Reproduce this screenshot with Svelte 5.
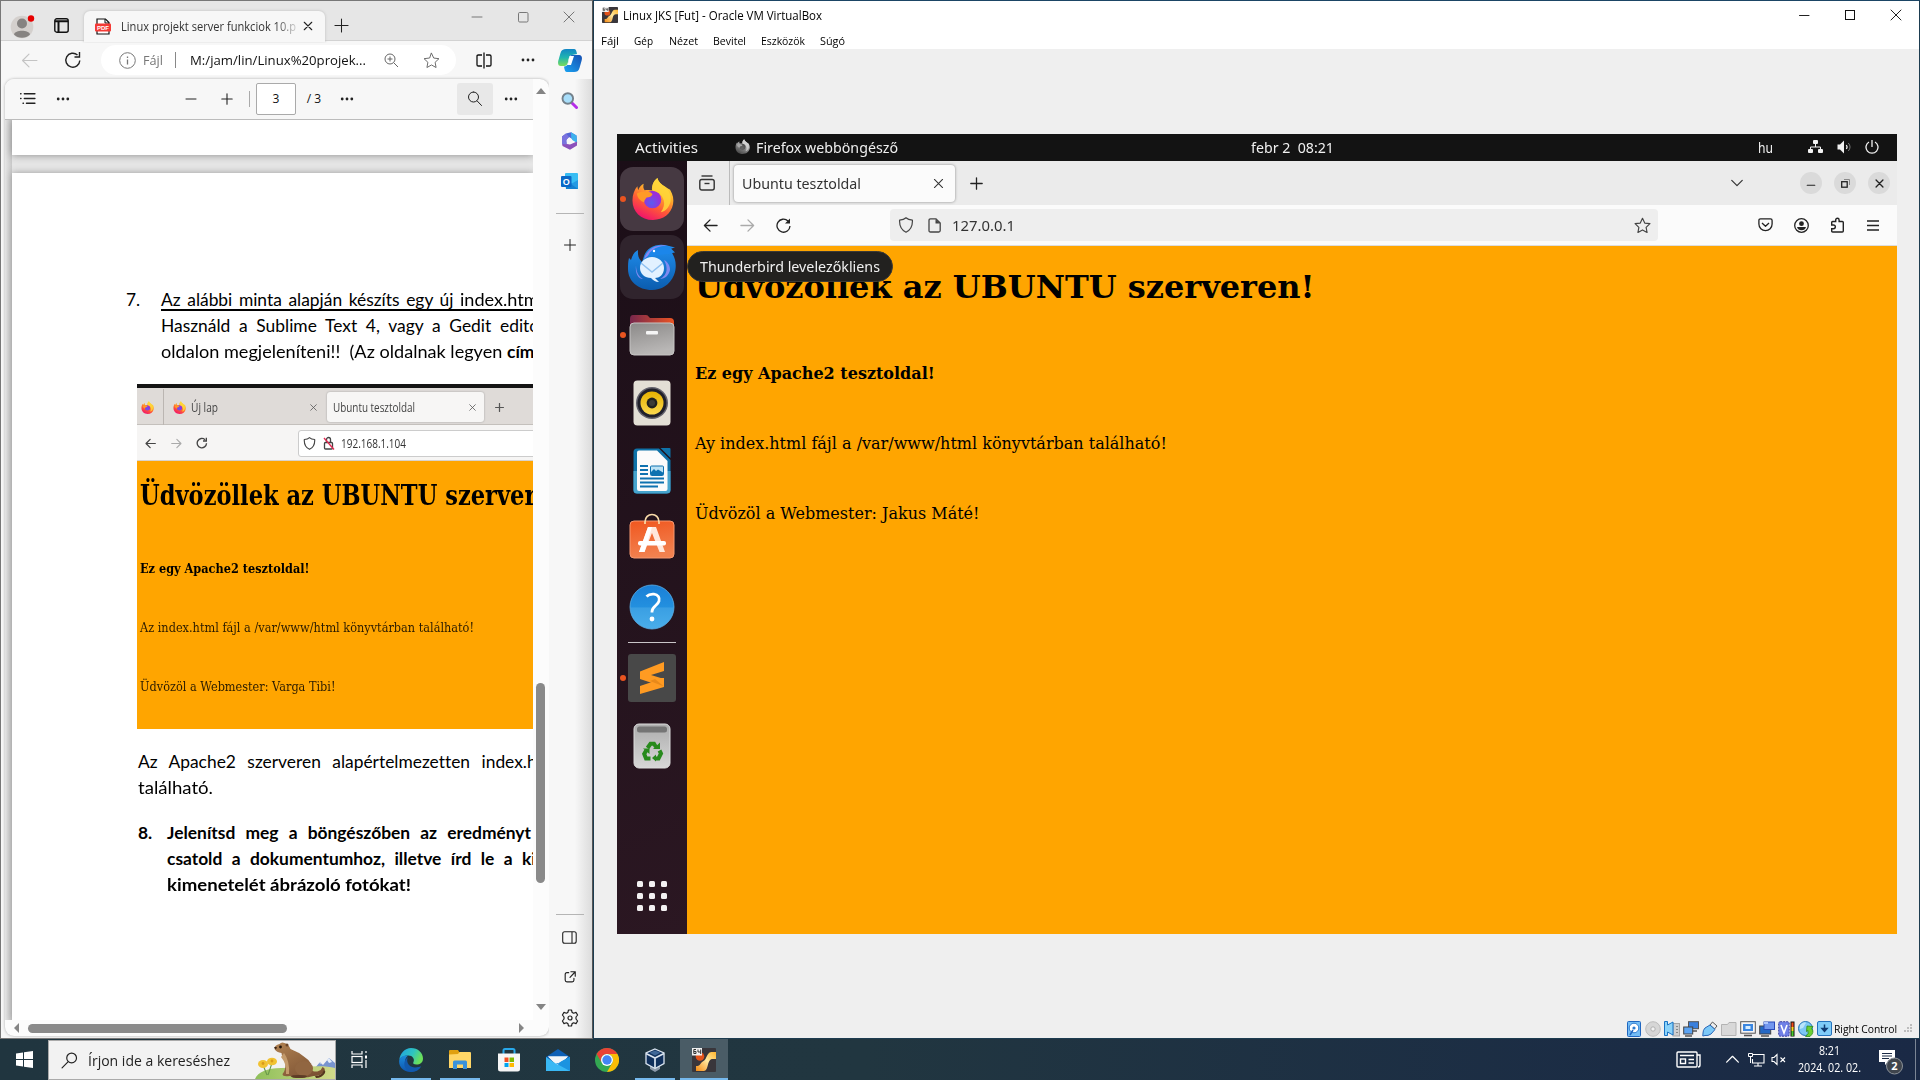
<script>
  // Stretches or narrows a line of text so that it takes up the given width.
  function fit(node, width) {
    const natural = node.getBoundingClientRect().width;
    if (!natural) return;
    node.style.transform = `scaleX(${width / natural})`;
    node.style.marginRight = `${width - natural}px`;
  }

  // Widens the spaces of a justified line until it reaches the given width.
  function justify(node, width) {
    const gaps = (node.textContent.match(/ /g) || []).length;
    const natural = node.getBoundingClientRect().width;
    node.style.wordSpacing = `${(width - natural) / gaps}px`;
  }

  const menus = [
    { label: 'Fájl', w: 18, col: 33 },
    { label: 'Gép', w: 19, col: 35 },
    { label: 'Nézet', w: 29, col: 44 },
    { label: 'Bevitel', w: 33, col: 48 },
    { label: 'Eszközök', w: 44, col: 59 },
    { label: 'Súgó', w: 25, col: 40 }
  ];

  const X = 'M3 3l10 10M13 3L3 13';
  const PLUS = 'M8 1v14M1 8h14';
  const BACK = 'M15 8H1.5M7.5 2l-6 6 6 6';
  const FORWARD = 'M1 8h13.500M8.500 2l6 6-6 6';
  const STAR = 'M8 1.200l2.100 4.500 4.900.6-3.600 3.400.9 4.900L8 12.200l-4.300 2.400.9-4.900L1 6.300l4.900-.6z';
  const SHIELD = 'M8 .8C6.500 2.200 4.400 2.900 1.600 3.100 1.300 8.500 3.500 13 8 15.200c4.500-2.200 6.700-6.700 6.400-12.100C11.600 2.900 9.500 2.200 8 .8z';
</script>

{#snippet line(d, size = 16, sw = 1, color = '#222')}
  <svg width={size} height={size} viewBox="0 0 16 16" fill="none" stroke={color} stroke-width={sw} stroke-linejoin="round" stroke-linecap="round"><path {d} /></svg>
{/snippet}

{#snippet dots(gap = 5, color = '#222')}
  <svg width="16" height="4" viewBox="-8 -2 16 4" fill={color}><circle cx={-gap} r="1.400" /><circle r="1.400" /><circle cx={gap} r="1.400" /></svg>
{/snippet}

{#snippet reload(size = 18, sw = 1.3, color = '#222')}
  <svg width={size} height={size} viewBox="0 0 18 18" fill="none" stroke={color} stroke-width={sw}><path d="M15.800 9.500A7 7 0 1 1 13.500 4M15.500 1v5h-5" /></svg>
{/snippet}

{#snippet firefox(size, gray = false)}
  <svg width={size} height={size} viewBox="0 0 42 44" class:gray>
    <defs>
      <linearGradient id="ffBody" x1=".8" y1="0" x2=".3" y2="1"><stop offset="0" stop-color="#fff04a" /><stop offset=".35" stop-color="#ffb02a" /><stop offset=".65" stop-color="#ff5a36" /><stop offset="1" stop-color="#f0106e" /></linearGradient>
      <radialGradient id="ffGlobe" cx=".45" cy=".7"><stop offset="0" stop-color="#5a5cf0" /><stop offset="1" stop-color="#9a30d8" /></radialGradient>
    </defs>
    <path fill="url(#ffBody)" d="M26 1c1 4 4 6.500 8 9 3 2 5 3 5 3 3 5 4 10 3 15-2 10-10 16-20.500 16C9 44 .5 35.500.5 24c0-6 2-11 5-14.500l.8 4c1.200-3 3.200-5.500 5.700-6.500-.8 3-.3 5 1 6.500 3-.6 6 0 8 .3C20 9 22 4 26 1z" />
    <circle cx="21" cy="23" r="9" fill="url(#ffGlobe)" />
    <path fill="#ff9a26" d="M5 17c3-2 6-2.500 9-1.500 3-.8 6 0 7 2.500-1 2-3 3-6 3-1.500 2-2.500 3-2.500 5C9 25 5.500 22 5 17z" />
    <path fill="#ffd63a" d="M26 1c1 4 4 6.500 8 9 4 4 6.500 9 5.500 15-1.500 6-5 10-10 11 3-4 4-8 3-12-1.200-5-5-9-12-10.500C20 9 22 4 26 1z" opacity=".85" />
  </svg>
{/snippet}

{#snippet vmIcon(size)}
  <svg width={size} height={size} viewBox="0 0 24 24">
    <defs><linearGradient id="vmPipe" x1="1" y1="0" x2="0" y2="1"><stop offset="0" stop-color="#ffb52e" /><stop offset=".45" stop-color="#ffe9a0" /><stop offset="1" stop-color="#f58a14" /></linearGradient></defs>
    <rect width="24" height="24" rx="1" fill="#39363b" />
    <circle cx="8" cy="8.500" r="4.300" fill="#e2521a" />
    <path fill="url(#vmPipe)" d="M24 4v7h-3c-3 0-4 2-5 5.500-1 4.500-2 6-4 6.500H4v-5c2 0 3 0 4-1.500 1.500-3 4-3 5.500-5.500 2-4 3-7 6-7z" />
    <rect width="10" height="7.500" fill="#f0f0f0" />
    <path d="M4 1.500H1.800v4H4V3.500H1.800M6 1.500V4h2.700M8.700 1.500v4.500" stroke="#333" fill="none" />
  </svg>
{/snippet}

<div class="desktop">
  <section class="edge">
    <header class="titlebar">
      <svg width="26" height="26" viewBox="0 0 26 26"><circle cx="12" cy="14" r="11.300" fill="#d4d0cd" /><circle cx="12" cy="10.500" r="5" fill="#868381" /><path d="M4 21.500c1-5 15-5 16 0a11.300 11.300 0 0 1-16 0z" fill="#868381" /><circle cx="21" cy="5.500" r="3.200" fill="#e60000" /></svg>
      <svg width="15" height="15" viewBox="0 0 15 15" fill="none" stroke="#111" stroke-width="1.400"><rect x=".8" y=".8" width="13.400" height="13.400" rx="2" /><path d="M1 3.200h13M4.500 4v10" stroke-width="2" /></svg>
      <div class="etab">
        <svg width="16" height="17" viewBox="0 0 16 17"><path d="M2 1h8.500L14 4.500V16H2z" fill="#fff" stroke="#111" stroke-width="1.200" /><path d="M10 1v4h4" fill="none" stroke="#111" /><rect y="5.500" width="16" height="8" rx="1" fill="#f43a35" /><text x="8" y="11.800" text-anchor="middle" class="pdf">PDF</text></svg>
        <div class="tabtitle"><span class="t" use:fit={175}>Linux projekt server funkciok 10.p</span></div>
        {@render line(X, 12, 1.5)}
      </div>
      {@render line(PLUS, 15, 1.1)}
      <i></i>
      {@render line('M3 8h10', 16, 1, '#777')}
      <svg width="11" height="11" viewBox="0 0 11 11"><rect x=".5" y=".5" width="9.500" height="9.500" rx="1.200" fill="none" stroke="#777" /></svg>
      {@render line(X, 16, 1, '#777')}
    </header>

    <div class="address">
      {@render line(BACK, 17, 1.1, '#c4c4c4')}
      {@render reload(18, 1.4)}
      <i></i>
      <div class="pill">
        <svg width="17" height="17" viewBox="0 0 17 17" fill="none" stroke="#777"><circle cx="8.500" cy="8.500" r="7.800" /><path d="M8.500 7.500v5M8.500 4.500v1.500" stroke-width="1.300" /></svg>
        <i></i><span class="t grey" use:fit={20}>Fájl</span>
        <b></b><i></i>
        <span class="t" use:fit={176}>M:/jam/lin/Linux%20projek...</span>
        <svg width="15" height="15" viewBox="0 0 15 15" fill="none" stroke="#666"><circle cx="6" cy="6" r="5" /><path d="M9.800 9.800L14 14M6 3.500v5M3.500 6h5" /></svg>
        {@render line(STAR, 17, 0.9, '#666')}
      </div>
      <svg width="16" height="17" viewBox="0 0 16 17" fill="none" stroke="#111" stroke-width="1.300"><path d="M6 3H2.300Q1 3 1 4.300v8.400Q1 14 2.300 14H6M10 3h3.700Q15 3 15 4.300v8.400Q15 14 13.700 14H10M8 .5v16" /></svg>
      {@render dots(5)}
      <i></i>
      <svg width="24" height="23" viewBox="0 0 24 23">
        <defs><linearGradient id="cp1" x1="0" y1="0" x2="0" y2="1"><stop offset="0" stop-color="#1386c5" /><stop offset=".5" stop-color="#20b5b0" /><stop offset="1" stop-color="#7bdc5a" /></linearGradient><linearGradient id="cp2" x1="1" y1="0" x2="0" y2="1"><stop offset="0" stop-color="#164fb2" /><stop offset="1" stop-color="#1aa4f2" /></linearGradient></defs>
        <path d="M8 0h8c2 0 2.500 2 3 5l-5 1c-3 0-3 3-4 7-.8 3-2 4-4 4H3c-3 0-3.500-3-2.500-6l2-7C3.500 1 5 0 8 0z" fill="url(#cp1)" />
        <path d="M14 6h7c3 0 3.500 3 2.500 6l-2 7c-1 3-2.500 4-5.500 4H9c-2 0-2.500-2-3-5.500 3 0 4-2 5-6.500.5-3 1-5 3-5z" fill="url(#cp2)" />
        <path d="M12 7h4l-3 9H9c2-2 1.500-8 3-9z" fill="#fff" />
      </svg>
    </div>

    <div class="below">
      <div class="viewer">
        <div class="docside">
          <div class="pdfbar">
            {@render line('M5 3.500h10M5 8h10M7 12.500h8M1.500 3.500h.4M1.500 8h.4M3.800 12.500h.4', 17, 1.3)}
            {@render dots(4.8)}
            <i></i>
            {@render line('M3 8h10', 16, 1)}
            {@render line('M8 2.800v10.400M2.800 8h10.400', 16, 1.1)}
            <b></b>
            <div class="pageno">3</div>
            <span class="t count">/ 3</span>
            {@render dots(4.8)}
            <i></i>
            <div class="find">{@render line('M6.500 1a5 5 0 1 0 0 10 5 5 0 0 0 0-10M10.200 10l4.300 4.500', 16, 1)}</div>
            {@render dots(4.8)}
          </div>
          <div class="paper">
            <div class="prev"></div>
            <div class="page">
              <div class="task seven">
                <span>7.</span>
                <div>
                  <p><span class="t u" use:justify={299}>Az alábbi minta alapján készíts egy új{' '}</span><span class="t u" use:fit={83}>index.html</span></p>
                  <p><span class="t" use:justify={339}>Használd a Sublime Text 4, vagy a Gedit{' '}</span>editort</p>
                  <p><span class="t" use:fit={346}>oldalon megjeleníteni!! &nbsp;(Az oldalnak legyen{' '}</span><strong>címe</strong></p>
                </div>
              </div>
              <div class="shot">
                <div class="black"></div>
                <div class="stabs">
                  {@render firefox(13)}
                  <b></b>
                  {@render firefox(13)}
                  <span class="t" use:fit={27}>Új lap</span>
                  {@render line(X, 9, 1.4, '#555')}
                  <div class="stab"><span class="t" use:fit={82}>Ubuntu tesztoldal</span>{@render line(X, 9, 1.4, '#555')}</div>
                  {@render line(PLUS, 9, 2.2, '#555')}
                </div>
                <div class="sbar">
                  {@render line(BACK, 11, 1.8, '#444')}
                  {@render line(FORWARD, 11, 1.6, '#aaa')}
                  {@render reload(12, 2, '#444')}
                  <div class="surl">
                    {@render line(SHIELD, 13, 1.4, '#444')}
                    <svg width="12" height="15" viewBox="0 0 12 15" fill="none" stroke="#444" stroke-width="1.300"><rect x="1.500" y="6.500" width="8" height="6.500" rx="1" /><path d="M3.500 6V3.500a2 2 0 0 1 4 0V6" /><path d="M1 2l10 11.500" stroke="#e22850" /></svg>
                    <span class="t" use:fit={65}>192.168.1.104</span>
                  </div>
                </div>
                <div class="sorange">
                  <h2><span class="t" use:fit={437}>Üdvözöllek az UBUNTU szerveren!</span></h2>
                  <h3><span class="t" use:fit={169.5}>Ez egy Apache2 tesztoldal!</span></h3>
                  <p><span class="t" use:fit={334}>Az index.html fájl a /var/www/html könyvtárban található!</span></p>
                  <p><span class="t" use:fit={195.5}>Üdvözöl a Webmester: Varga Tibi!</span></p>
                </div>
              </div>
              <div class="para">
                <p><span class="t" use:justify={343.5}>Az Apache2 szerveren alapértelmezetten{' '}</span>index.html</p>
                <p><span class="t" use:fit={75}>található.</span></p>
              </div>
              <div class="task eight">
                <span>8.</span>
                <div>
                  <p><span class="t" use:justify={364}>Jelenítsd meg a böngészőben az eredményt</span></p>
                  <p><span class="t" use:justify={355}>csatold a dokumentumhoz, illetve írd le a{' '}</span>kiszolgáló</p>
                  <p><span class="t" use:fit={244}>kimenetelét ábrázoló fotókat!</span></p>
                </div>
              </div>
            </div>
          </div>
        </div>
        <div class="vscroll"><svg width="10" height="6"><path d="M5 0l5 6H0z" fill="#858585" /></svg><div></div><svg width="10" height="6"><path d="M5 6l5-6H0z" fill="#858585" /></svg></div>
        <div class="hscroll"><svg width="6" height="10"><path d="M0 5l5-5v10z" fill="#858585" /></svg><div></div><svg width="6" height="10"><path d="M6 5L1 0v10z" fill="#858585" /></svg></div>
      </div>

      <aside>
        <svg width="17" height="17" viewBox="0 0 17 17"><path d="M10 10l5.500 5.500" stroke="#b52ee8" stroke-width="3" stroke-linecap="round" /><circle cx="6.800" cy="6.500" r="5.300" fill="#a8defa" stroke="#74818b" stroke-width="1.900" /></svg>
        <svg width="17" height="18" viewBox="0 0 17 18"><path d="M5 1.500L10 .3l5.500 3.200.5 7-4-3L8 5 5.500 8v6L1 12V4.500z" fill="#5465d6" /><path d="M10 .3l5.500 3.200.7 7.500-5-3-1-2.500z" fill="#3eb1ed" /><path d="M1 11l5 1 3 .5 7-3v4L9 17.700 1.500 14z" fill="#8b50bb" /><path d="M1 4.500L5 1.500 8 5 5.500 8v4.500L1 12z" fill="#7a72de" /><circle cx="8.500" cy="9" r="2.800" fill="#f5f5f8" /></svg>
        <svg width="18" height="17" viewBox="0 0 18 17"><rect x="4" width="13" height="14" rx="1" fill="#38bdf3" /><path d="M4 8l13 5v3H5z" fill="#1480d0" /><path d="M17 7v9l-7-5z" fill="#2499e3" /><rect x="0" y="3" width="10.500" height="11" rx="1" fill="#0b69c7" /><text x="5.200" y="11.800" text-anchor="middle" class="olk">O</text></svg>
        <hr />
        {@render line('M8 2.500v11M2.500 8h11', 16, 1)}
        <i></i>
        <hr class="end" />
        <i></i>
        <svg width="15" height="13" viewBox="0 0 15 13" fill="none" stroke="#222" stroke-width="1.100"><rect x=".7" y=".7" width="13.500" height="11.500" rx="2" /><path d="M10 1v11" /></svg>
        {@render line('M6.500 3H4.500Q2.500 3 2.500 5v6.500q0 2 2 2h6q2 0 2-2V9.500M9 2h5v5M14 2L8 8.500', 14, 1.3)}
        <svg width="18" height="18" viewBox="0 0 18 18" fill="none" stroke="#222" stroke-width="1.200"><path d="M7.500 1h3l.6 2.400 1.500.8 2.400-.8L16.600 6 15 8v2l1.600 2-1.600 2.600-2.400-.8-1.500.8-.6 2.400h-3l-.6-2.400-1.500-.8-2.400.8L1.400 12 3 10V8L1.400 6 3 3.400l2.400.8 1.500-.8z" stroke-linejoin="round" /><circle cx="9" cy="9" r="2" /></svg>
      </aside>
    </div>
  </section>

  <section class="vbox">
    <header class="vtitle">
      {@render vmIcon(16)}
      <span class="t" use:fit={199}>Linux JKS [Fut] - Oracle VM VirtualBox</span>
      <i></i>
      {@render line('M3.500 8.500h9.500', 16, 1)}
      <svg width="11" height="11"><rect x=".5" y=".5" width="9" height="9" fill="none" stroke="#111" /></svg>
      {@render line('M3 3l10 10M13 3L3 13', 16, 1)}
    </header>
    <nav>{#each menus as m}<div style:width="{m.col}px"><span class="t" use:fit={m.w}>{m.label}</span></div>{/each}</nav>

    <div class="guest">
      <div class="topbar">
        <span class="t" use:fit={63}>Activities</span>
        {@render firefox(15, true)}
        <span class="t" use:fit={142}>Firefox webböngésző</span>
        <span class="t clock" use:fit={83}>febr 2 &nbsp;08:21</span>
        <span class="t hu" use:fit={15}>hu</span>
        <svg width="15" height="14" viewBox="0 0 15 14" fill="#f2f2f2"><rect x="5" width="5" height="4" rx="1" /><rect y="9" width="5" height="4" rx="1" /><rect x="10" y="9" width="5" height="4" rx="1" /><path d="M2.500 9V7h10v2M7.500 4v3" fill="none" stroke="#f2f2f2" /></svg>
        <svg width="15" height="14" viewBox="0 0 15 14"><path d="M.5 4.500H3L7 .5v13l-4-4H.5z" fill="#f2f2f2" /><path d="M9.300 5q1.600 2 0 4" stroke="#f2f2f2" fill="none" stroke-width="1.200" /><path d="M11.300 3q3.500 4 0 8" stroke="#777" fill="none" /></svg>
        <svg width="14" height="14" viewBox="0 0 14 14" fill="none" stroke="#f2f2f2" stroke-width="1.300"><path d="M4 2a6 6 0 1 0 6 0M7 0v7" /></svg>
      </div>

      <div class="dock">
        <div class="tile lit run">{@render firefox(43)}</div>
        <div class="tile soft">
          <svg width="50" height="50" viewBox="0 0 50 50">
            <defs><linearGradient id="tb" x1="0" y1="0" x2="0" y2="1"><stop offset="0" stop-color="#2190f0" /><stop offset="1" stop-color="#0b5cae" /></linearGradient></defs>
            <path d="M17 13C20 4 30 0 40 2.500l8 2-4 1 4 4-3 .5c4 6 5 14 2 22-4 10-13 15-22 15C11 47 1 38 1 26c0-4 0-7 1-11l2 2c1-4 3-8 7-10-.5 6 1 9 4 12z" fill="url(#tb)" />
            <path d="M17 16C20 6 29 1 40 2.500c-8 1-15 4-18 9.500z" fill="#8a86f0" />
            <path d="M21 13C24 6 31 3 40 2.800l6 2.200-4 1 4 4-4 1c-6 0-12 1-16 2z" fill="#1b86ea" />
            <path d="M37 17c4 7 4 15-4 19 5 0 9-4 10-9 0-4-2-8-6-10zM9 22c0 7 3 12 7 14-5 0-8-6-7-14z" fill="#7f8af0" />
            <path d="M25 14c7 0 12 5 12 11 0 7-5 10-9 10l4 4c-4 0-6-2-8-4-6 0-11-4-11-10s5-11 12-11z" fill="#e2f1ff" />
            <path d="M14 20l11 9 11-9" stroke="#8fc0f0" stroke-width="1.500" fill="none" /><circle cx="27" cy="8" r="1.200" fill="#fff" />
          </svg>
        </div>
        <div class="tile run">
          <svg width="46" height="42" viewBox="0 0 46 42">
            <defs><linearGradient id="fol" x2="1"><stop offset="0" stop-color="#77274c" /><stop offset="1" stop-color="#eb5424" /></linearGradient><linearGradient id="folg" x2=".3" y2="1"><stop offset="0" stop-color="#8b8988" /><stop offset="1" stop-color="#b9b7b6" /></linearGradient></defs>
            <path d="M4 1h13q2 0 3 2l1 1h20q4 0 4 4v15H1V5q0-4 3-4z" fill="url(#fol)" /><rect x="1" y="9" width="44" height="32" rx="4" fill="url(#folg)" stroke="#c6c4c3" /><rect x="17" y="17" width="12" height="3.500" rx="1" fill="#f5f5f5" />
          </svg>
        </div>
        <div class="tile">
          <svg width="38" height="46" viewBox="0 0 38 46"><defs><linearGradient id="spk" x2="0" y2="1"><stop offset="0" stop-color="#e5b100" /><stop offset="1" stop-color="#fbd94e" /></linearGradient></defs><rect x=".5" y=".5" width="37" height="45" rx="4" fill="#e3dfd5" /><circle cx="19" cy="23" r="16" fill="#62616b" /><circle cx="19" cy="23" r="14.500" fill="#20202a" /><circle cx="19" cy="23" r="11.500" fill="url(#spk)" /><circle cx="19" cy="23" r="5.400" fill="#20221f" /><circle cx="19" cy="23" r="3" fill="#3b3c38" /></svg>
        </div>
        <div class="tile">
          <svg width="38" height="46" viewBox="0 0 38 46"><path d="M4 .5h22L37.500 12v30q0 3.500-4 3.500H4Q.5 45.500.5 42V4Q.5.5 4 .5z" fill="#0f72a8" /><path d="M.5 23h37v19q0 3.500-4 3.500H4Q.5 45.500.5 42z" fill="#46a4cd" /><path d="M6 2.500h18L34.500 13v28q0 2-2 2H6q-2 0-2-2V4.500q0-2 2-2z" fill="#fbfbfb" /><path d="M27.500 0h9q1 0 1 1v9z" fill="#0f72a8" /><path d="M7 18h8M7 22h8M7 26h8M7 30.500h24M7 34.500h24M7 38.500h18" stroke="#0f72b0" stroke-width="1.900" /><rect x="17.500" y="18" width="13" height="9.500" rx="1" fill="#bde3f5" stroke="#0f72b0" /><path d="M18 27v-3l3-3 2 2 2-1.500 5 3V27z" fill="#0f72b0" /></svg>
        </div>
        <div class="tile store">
          <svg width="46" height="46" viewBox="0 0 46 46"><defs><linearGradient id="sw" x2=".2" y2="1"><stop offset="0" stop-color="#f0571f" /><stop offset="1" stop-color="#f2814f" /></linearGradient></defs><rect x="1" y="8" width="44" height="37" rx="4" fill="url(#sw)" stroke="#f79870" /><path d="M16 11V9c0-10 14-10 14 0v2" fill="none" stroke="#f9dba9" stroke-width="1.700" /><path d="M19 14h8l9 25h-5.500l-7.500-19-7.500 19H10z" fill="#ffe7db" /><path d="M23 14l-7.500 25H10l9-25z" fill="#fff" /><rect x="9" y="28" width="28" height="4.500" rx="2" fill="#fff" /></svg>
        </div>
        <div class="tile">
          <svg width="46" height="46" viewBox="0 0 46 46"><defs><linearGradient id="hlp" x2="0" y2="1"><stop offset="0" stop-color="#1a7fd6" /><stop offset=".5" stop-color="#2390df" /><stop offset=".52" stop-color="#3a9fe3" /><stop offset="1" stop-color="#4aaeea" /></linearGradient></defs><circle cx="23" cy="23" r="22" fill="url(#hlp)" stroke="#5bb0ea" stroke-width=".8" /><path d="M17.500 12.500c2-2 5-2.500 7.500-2.300 4 .4 6 3.600 5 7-1 4-7 5.300-7 10.300v1" fill="none" stroke="#fff" stroke-width="2.800" /><circle cx="23" cy="35" r="2.400" fill="#fff" /></svg>
        </div>
        <hr />
        <div class="tile run">
          <svg width="48" height="48" viewBox="0 0 48 48"><rect width="48" height="48" rx="3" fill="#484848" /><path d="M12 17.500L36 8v9l-13 4 13 4v8l-24-8z" fill="#ff9b22" /><path d="M36 24v9L12 40v-8l12-4-12-4z" fill="#ff9b22" /><path d="M22 27l14 5.500-9-7.500z" fill="#d97d16" opacity=".6" /></svg>
        </div>
        <div class="tile">
          <svg width="38" height="46" viewBox="0 0 38 46"><defs><linearGradient id="tr" x2="0" y2="1"><stop offset="0" stop-color="#adadad" /><stop offset="1" stop-color="#d7d7d7" /></linearGradient></defs><rect x="1" y="1" width="36" height="44" rx="5" fill="url(#tr)" stroke="#dcdcdc" /><rect x="4" y="3.500" width="30" height="6" rx="2.500" fill="#757575" /><g fill="none" stroke="#278a1c" stroke-width="4"><path d="M14.500 25l3-4.200h3.500l2 3.200" /><path d="M26.500 27.500l1.500 3-2.500 5H22" /><path d="M17.500 35.500H13l-1.800-4.500 2-3.500" /></g><path d="M20 26h7v-6.500zM23 31.500v7l-4-3.500zM10 25.500h6.500V31z" fill="#278a1c" /></svg>
        </div>
        <div class="tile apps"><svg width="30" height="30" viewBox="0 0 30 30" fill="#f3f1f2">{#each [0, 12, 24] as y}{#each [0, 12, 24] as x}<rect {x} {y} width="6" height="6" rx="1.500" />{/each}{/each}</svg></div>
      </div>

      <div class="ff">
        <div class="fftabs">
          <svg width="16" height="16" viewBox="0 0 16 16" fill="none" stroke="#333" stroke-width="1.400"><path d="M2.500 1h11" /><rect x=".8" y="4.500" width="14.400" height="10.500" rx="2" /><path d="M5.500 8.500h5" /></svg>
          <b></b>
          <div class="fftab"><span class="t" use:fit={119}>Ubuntu tesztoldal</span>{@render line('M3 3l10 10M13 3L3 13', 13, 1.3, '#333')}</div>
          {@render line(PLUS, 13, 1.6)}
          {@render line('M2 5l6 6 6-6', 14, 1.4, '#333')}
          <div class="round">{@render line('M3 11h10', 12, 1.6)}</div>
          <div class="round"><svg width="9" height="9" viewBox="0 0 9 9" fill="none"><rect x=".7" y="2.700" width="5.500" height="5.500" stroke="#222" stroke-width="1.300" /><path d="M3 .5h5.500V6" stroke="#888" /></svg></div>
          <div class="round">{@render line('M3 3l10 10M13 3L3 13', 11, 1.9)}</div>
        </div>
        <div class="ffbar">
          {@render line(BACK, 15, 1.4)}
          {@render line(FORWARD, 15, 1.4, '#aaa')}
          <svg width="15" height="15" viewBox="0 0 15 15" fill="none" stroke="#222" stroke-width="1.300"><path d="M14 8A6.500 6.500 0 1 1 12 3" /><path d="M14 .5V5.500H9z" fill="#222" stroke="none" /></svg>
          <div class="ffurl">
            {@render line(SHIELD, 16, 1.2, '#444')}
            <svg width="13" height="15" viewBox="0 0 13 15"><path d="M2.500.8H8l4.200 4.200v7.500q0 1.500-1.500 1.500H2.500Q1 14 1 12.500v-10Q1 .8 2.500.8z" fill="none" stroke="#444" stroke-width="1.300" /><path d="M7.500 1v4.500H12z" fill="#444" /></svg>
            <span class="t" use:fit={63}>127.0.0.1</span>
            {@render line(STAR, 17, 1.1, '#444')}
          </div>
          <svg width="15" height="14" viewBox="0 0 15 14" fill="none" stroke="#222" stroke-width="1.300"><path d="M2.500.8h10q1.600 0 1.600 1.700V6a6.600 6.600 0 0 1-13.200 0V2.500Q.9.800 2.500.8zM4 5l3.500 3.300L11 5" stroke-linejoin="round" /></svg>
          <svg width="15" height="15" viewBox="0 0 15 15"><circle cx="7.500" cy="7.500" r="6.800" fill="none" stroke="#222" stroke-width="1.300" /><circle cx="7.500" cy="5.700" r="2.400" fill="#222" /><path d="M3 9h9q-1 3.300-4.500 3.300T3 9z" fill="#222" /></svg>
          <svg width="15" height="16" viewBox="0 0 15 16" fill="none" stroke="#222" stroke-width="1.400"><path d="M1.700 8V5.500q0-1 1-1h3V3a1.700 1.700 0 0 1 3.400 0v1.500h3.200q1 0 1 1V14q0 1-1 1H2.700q-1 0-1-1v-2.300H3.500a1.700 1.700 0 0 0 0-3.700z" /></svg>
          <svg width="12" height="11" viewBox="0 0 12 11" stroke="#222" stroke-width="1.300"><path d="M0 1h12M0 5.500h12M0 10h12" /></svg>
        </div>
        <main>
          <h1>Üdvözöllek az UBUNTU szerveren!</h1>
          <h4>Ez egy Apache2 tesztoldal!</h4>
          <p>Ay index.html fájl a /var/www/html könyvtárban található!</p>
          <p>Üdvözöl a Webmester: Jakus Máté!</p>
          <div class="tooltip"><span class="t" use:fit={180}>Thunderbird levelezőkliens</span></div>
        </main>
      </div>
    </div>

    <footer>
      <svg width="14" height="16" viewBox="0 0 14 16"><rect x=".5" y=".5" width="13" height="15" rx="1" fill="#73bdf5" stroke="#1f66c0" /><circle cx="7" cy="7" r="4.800" fill="#fff" stroke="#2d7bd0" /><circle cx="7" cy="7" r="1.600" fill="#2d7bd0" /><path d="M3 14l3-5" stroke="#1f66c0" stroke-width="1.500" /></svg>
      <svg width="16" height="16" viewBox="0 0 16 16"><circle cx="8" cy="8" r="7.300" fill="#d6d6d6" stroke="#bcbcbc" /><circle cx="8" cy="8" r="2.200" fill="#f2f2f2" stroke="#b0b0b0" /></svg>
      <svg width="16" height="16" viewBox="0 0 16 16"><rect x="9" y="2.500" width="6.500" height="12.500" fill="#cfcfcf" stroke="#a5a5a5" /><path d="M.5.5h3v3.500L9 1v13l-5.500-3v3.500h-3z" fill="#8bd3f9" stroke="#1973c4" /><path d="M13 5v1M13 8v1M13 11v1" stroke="#888" stroke-width="2" /></svg>
      <svg width="16" height="16" viewBox="0 0 16 16"><rect x="5.500" y=".7" width="10" height="7" fill="#3a80dd" stroke="#555" /><path d="M8 10h6" stroke="#555" stroke-width="1.500" /><rect x=".7" y="6" width="9" height="7" fill="#5ca4f2" stroke="#444" /><path d="M2 15h7" stroke="#555" stroke-width="1.500" /></svg>
      <svg width="16" height="16" viewBox="0 0 16 16"><path d="M10.500 1l4.500 4-2.500 3-4.500-4z" fill="#eee" stroke="#555" /><path d="M8 4l5 4.500-4 4.500q-3 2-6 1.500L.8 15 1 12q0-3 2-5z" fill="#7cc9f8" stroke="#2867b8" /></svg>
      <svg width="16" height="16" viewBox="0 0 16 16"><path d="M.5 3.500h6l1.500-2h7v13H.5z" fill="#d8d8d8" stroke="#b3b3b3" /></svg>
      <svg width="16" height="16" viewBox="0 0 16 16"><rect x=".7" y=".7" width="14.600" height="11.500" fill="#f5f5f5" stroke="#555" /><rect x="3" y="3" width="10" height="7" fill="#3a86e0" /><rect x="5.500" y="5" width="5" height="3" fill="#d6edff" /><path d="M4 14.500h8" stroke="#555" stroke-width="1.600" /></svg>
      <svg width="16" height="16" viewBox="0 0 16 16"><rect x=".7" y="5" width="11" height="8" fill="#2469c4" stroke="#444" /><path d="M2 15h8" stroke="#555" stroke-width="1.500" /><rect x="5" y="1" width="10.500" height="7.500" fill="#7397ee" stroke="#2a4ab8" /><path d="M5 1h4v2H5z" fill="#b0c8ff" /></svg>
      <svg width="17" height="16" viewBox="0 0 17 16"><rect x=".7" y=".7" width="10.500" height="14.500" rx="1.500" fill="#6f80e6" stroke="#3c3f9e" stroke-dasharray="2 1" /><path d="M3 4l3 8 3-8" fill="none" stroke="#fff" stroke-width="1.600" /><rect x="12.500" y=".5" width="4" height="15" fill="#111" /><rect x="13.500" y="1.500" width="2" height="5" fill="#f44b18" /><rect x="13.500" y="6" width="2" height="4" fill="#ffd91c" /><rect x="13.500" y="10" width="2" height="5" fill="#47c92c" /></svg>
      <svg width="16" height="16" viewBox="0 0 16 16"><circle cx="7.500" cy="7.500" r="7" fill="#7cc7f5" stroke="#2372b6" /><path d="M2 4q4-4 6-2L5 7l-3 1z" fill="#b9e4fb" /><path d="M9 5l6 .5-1.500 2Q17 11 12 15.500H7.500q4-3 2.500-6l-1.500 1z" fill="#6bd033" stroke="#2d8a1c" stroke-width=".8" /></svg>
      <svg width="15" height="15" viewBox="0 0 15 15"><rect x=".5" y=".5" width="14" height="14" rx="1.500" fill="#7fccf8" stroke="#2573bd" /><path d="M7.500 3.500v7M5 7.500l2.500 2.800 2.500-2.800z" fill="#103c74" stroke="#103c74" stroke-width="1.500" /></svg>
      <span class="t" use:fit={63}>Right Control</span>
      <svg width="9" height="9" viewBox="0 0 9 9" fill="#bdbdbd"><path d="M6 0h2v2H6zM3 3h2v2H3zM6 3h2v2H6zM0 6h2v2H0zM3 6h2v2H3zM6 6h2v2H6z" /></svg>
    </footer>
  </section>

  <div class="taskbar">
    <div class="app start"><svg width="17" height="17" viewBox="0 0 17 17" fill="#fff"><path d="M0 2.500l7-1V8H0zM8 1.300L17 0v8H8zM0 9h7v6.500l-7-1zM8 9h9v8l-9-1.300z" /></svg></div>
    <div class="search">
      {@render line('M10 1a4.600 4.600 0 1 0 0 9.200A4.600 4.600 0 0 0 10 1M6.800 9L1 15', 17, 1.1)}
      <span class="t" use:fit={142}>Írjon ide a kereséshez</span>
      <svg class="marmot" width="80" height="38" viewBox="0 0 80 38">
        <defs><linearGradient id="hill" x2="1"><stop offset="0" stop-color="#8fc05a" /><stop offset="1" stop-color="#d2da8a" /></linearGradient><linearGradient id="fur" x1="0" y1="0" x2=".8" y2="1"><stop offset="0" stop-color="#b08252" /><stop offset="1" stop-color="#7a5032" /></linearGradient></defs>
        <path d="M60 27l5-6 3 3 6-7 6 5v9H62z" fill="#7894cf" /><path d="M72 19l2-2 3 4-3 1zM64 22l1-1 2 2z" fill="#e4edfa" />
        <path d="M0 38c3-7 12-11 26-11 20 0 40-4 54 0v11z" fill="url(#hill)" />
        <path d="M8 24l4 10M17 22l-4 12" stroke="#69994a" stroke-width="1.100" />
        <g fill="#f1c232"><ellipse cx="8" cy="23" rx="5" ry="4" /><ellipse cx="17" cy="20.500" rx="5" ry="3.800" /></g><g fill="#d99a1c"><circle cx="8" cy="22.500" r="1.400" /><circle cx="17" cy="20" r="1.400" /></g>
        <path d="M19.500 8q0-4 5-5 2-2.500 5-1 4 1 6 6 8 3 14 8 8 5 8 14 4 1 6 0 3-1 4-4 3 1 2 4-3 5-11 5-10 3-24 0-7 1-7-2 3-3 3-11-4-7-4-10-5-.500-7-4z" fill="url(#fur)" />
        <path d="M29 12q6 8 5 21h-3q1-10-5-17z" fill="#c49b6c" /><ellipse cx="49" cy="27.500" rx="9" ry="7.500" fill="#916641" /><circle cx="25.500" cy="6" r="1.400" fill="#221409" /><path d="M19 6.500q1.500-1.500 3 0l-1.200 2z" fill="#3b2415" /><circle cx="32" cy="4" r="1.500" fill="#6b4527" /><ellipse cx="44" cy="35.500" rx="8" ry="1.600" fill="#5d3c26" /><path d="M60 35q7 0 9-6 2 1 1 3-3 5-9 5z" fill="#55351f" />
      </svg>
    </div>
    <div class="app view"><svg width="18" height="17" viewBox="0 0 18 17" fill="none" stroke="#fff" stroke-width="1.200"><path d="M1 0v3h10V0M1 17v-3h10v3M15 0v2M15 9v8" /><rect x="1" y="5.500" width="10" height="6" /><rect x="14" y="4.500" width="2" height="3" fill="#fff" stroke="none" /></svg></div>
    <div class="app open">
      <svg width="24" height="24" viewBox="0 0 24 24"><defs><linearGradient id="eg1" x1="0" y1="0" x2="1" y2=".4"><stop offset="0" stop-color="#1fa0e6" /><stop offset=".6" stop-color="#2ec4c0" /><stop offset="1" stop-color="#6be05a" /></linearGradient><linearGradient id="eg2" x2="0" y2="1"><stop offset="0" stop-color="#1b8bdc" /><stop offset="1" stop-color="#0e55ae" /></linearGradient></defs><path d="M.3 12C1 5 6 0 12 0c7 0 12 5 12 10.500 0 4-3 6-6.500 6-3 0-4-1-3-2.500 1.500-3-1-6.500-5-6.500C5 7.500 1.500 9 .3 12z" fill="url(#eg1)" /><path d="M.2 12.500C1 8.500 5 7 9 7.500c-4 3-3.500 9 1 11.500 4 2 8 1.500 12-.500-2 4-6.500 5.800-10.500 5.500C4 23.500-.5 18.500.2 12.500z" fill="url(#eg2)" /><path d="M9 9c-2.500 5 1 10.500 7 10.500 2.500 0 4.500-.5 6-1.200-3 4.500-8.500 6.200-12.500 4.700C4 20 4 12.500 9 9z" fill="#1259ac" /></svg>
    </div>
    <div class="app open"><svg width="22" height="19" viewBox="0 0 22 19"><path d="M0 1q0-1 1-1h8l1.500 2.500V5H0z" fill="#e0a010" /><path d="M0 4.500l9-.500 1.500-2H21q1 0 1 1v15H0z" fill="#ffd667" /><path d="M4 19v-7q0-1.500 1.500-1.500h11Q18 10.500 18 12v7h-4v-4.500H8V19z" fill="#3a92d9" /></svg></div>
    <div class="app"><svg width="24" height="24" viewBox="0 0 24 24"><path d="M6.500 7V2.500q0-1.500 1.500-1.500h8q1.500 0 1.500 1.500V7" fill="none" stroke="#28a8ea" stroke-width="2" /><path d="M1 5.500h22V21q0 2.500-2.500 2.500h-17Q1 23.500 1 21z" fill="#f6f6f6" /><path fill="#f25022" d="M7.500 9.500h4V14h-4z" /><path fill="#7fba00" d="M12.500 9.500H17V14h-4.500z" /><path fill="#00a4ef" d="M7.500 15h4v4h-4z" /><path fill="#ffb900" d="M12.500 15H17v4h-4.500z" /></svg></div>
    <div class="app"><svg width="24" height="22" viewBox="0 0 24 22"><path d="M0 8L12 0l12 8v4H0z" fill="#0d5fb5" /><path d="M2 7.500h20L14 16h-4z" fill="#f2f5f8" /><path d="M0 8l12 8 12-8v14H0z" fill="#39b8f4" /><path d="M24 8v14L10 14.500z" fill="#1c93e0" /><path d="M2 7.500h20l-10 7z" fill="#f2f5f8" /></svg></div>
    <div class="app"><svg width="24" height="24" viewBox="0 0 24 24"><circle cx="12" cy="12" r="12" fill="#33a852" /><path d="M1.600 6A12 12 0 0 1 22.400 6H12a6 6 0 0 0-5.200 9z" fill="#e94235" /><path d="M22.400 6A12 12 0 0 1 12 24l5.200-9A6 6 0 0 0 12 6z" fill="#fbbc05" /><circle cx="12" cy="12" r="6" fill="#fff" /><circle cx="12" cy="12" r="4.700" fill="#4285f4" /></svg></div>
    <div class="app open"><svg width="22" height="24" viewBox="0 0 22 24"><path d="M6 18l5 3 5-3v3l-5 3-5-3z" fill="#8b98a8" /><path d="M11 1l9 4v10.500L11 20.500 2 15.500V5z" fill="#10305c" stroke="#dbe5f0" stroke-width="1.300" /><path d="M2 5.500l9 4.500 9-4.500M11 10v10" stroke="#dbe5f0" fill="none" stroke-width="1.700" /><path d="M5.500 4.800L11 2.500l5.500 2.300L11 7.500z" fill="#3f6797" /></svg></div>
    <div class="app open active">{@render vmIcon(24)}</div>
    <i></i>
    <svg width="25" height="17" viewBox="0 0 25 17" fill="none" stroke="#fff" stroke-width="1.400"><rect x="1" y="1" width="20" height="15" rx="1" /><path d="M21 4h3v10q0 2-2 2M4 4.500h14M12.500 8.500h5.500M12.500 12h5.500" /><rect x="4.500" y="8" width="5" height="4.500" /></svg>
    {@render line('M2.500 10.500L8 5l5.500 5.500', 17, 1.2, '#fff')}
    <svg width="17" height="14" viewBox="0 0 17 14" fill="none" stroke="#fff"><path d="M5 1.500h11v8.500H4.500V6M10 10v3M6 13h8" stroke-width="1.100" /><path d="M.5.500h4v3h-4zM2.500 4v6" /></svg>
    <svg width="16" height="13" viewBox="0 0 16 13" fill="none" stroke="#fff" stroke-width="1.100"><path d="M1 4.500h2l3-3v10l-3-3H1zM9.500 4.500l4.500 4.500M14 4.500L9.500 9" /></svg>
    <div class="time"><span class="t" use:fit={21}>8:21</span><span class="t" use:fit={63}>2024. 02. 02.</span></div>
    <svg class="notice" width="26" height="26" viewBox="0 0 26 26"><path d="M0 1h16v12H9l-3 3v-3H0z" fill="#fff" /><path d="M3 4.500h10M3 7h10M3 9.500h7" stroke="#1b2a45" /><circle cx="15.500" cy="17" r="8" fill="#3f454d" stroke="#8c9299" /><text x="15.500" y="21" text-anchor="middle" class="badge">2</text></svg>
    <b></b>
  </div>
</div>

<style>
  :global(body) { margin: 0; overflow: hidden; }
  .desktop { width: 1920px; height: 1080px; overflow: hidden; display: grid; grid-template: 1039px 41px / 593px 1327px; font-family: "Open Sans", "Noto Sans", sans-serif; font-size: 12px; color: #111; }
  .desktop :global(*) { box-sizing: border-box; }
  svg { display: block; flex: none; }
  p, h1, h2, h3, h4 { margin: 0; }
  .t { display: inline-block; white-space: pre; transform-origin: 0 50%; justify-self: start; }
  .gray { filter: grayscale(1); }
  hr { margin: 0; border: 0; }

  /* Edge window */
  .edge { border: 1px solid #777; border-right-color: #555; background: #f7f7f7; display: grid; grid-template-rows: 40px 38px 1fr; min-width: 0; }
  .titlebar { background: #e6e6e6; display: grid; grid-template-columns: 44px 32px 7px 241px 32px 1fr 46px 46px 46px; align-items: center; justify-items: center; padding-top: 8px; border-bottom: 1px solid #d2d2d2; }
  .titlebar > :nth-child(-n + 2), .titlebar > :nth-child(4) { margin-bottom: 1px; }
  .titlebar > :nth-child(n + 6) { margin-bottom: 18px; }
  .etab { grid-column: 4; width: 241px; height: 32px; margin-bottom: -1px; padding-bottom: 1px; background: #f7f7f7; border-radius: 6px 6px 0 0; display: grid; grid-template-columns: 37px 175px 24px; align-items: center; justify-items: center; box-shadow: 0 0 3px #bbb; clip-path: inset(-4px -4px 0 -4px); }
  .tabtitle { width: 175px; overflow: hidden; mask-image: linear-gradient(90deg, #000 88%, transparent 103%); color: #333; }
  .pdf { font: 700 6px "Liberation Sans", sans-serif; fill: #fff; }
  .address { display: grid; grid-template-columns: 56px 32px 12px 355px 55px 34px 4px 41px; align-items: center; justify-items: center; }
  .pill { width: 355px; height: 30px; border-radius: 15px; background: #fff; padding-left: 16px; display: grid; grid-template-columns: 20px 6px 20px 25px 2px 176px 50px 30px; align-items: center; justify-items: center; font-size: 13px; }
  .pill b { width: 1px; height: 16px; background: #888; }
  .grey { color: #767676; }
  .below { display: grid; grid-template-columns: 544px 47px; padding-left: 4px; min-height: 0; margin-right: -4px; }
  .viewer { width: 544px; height: 957px; border-radius: 9px; overflow: hidden; background: #fcfcfc; box-shadow: 0 0 3px #aaa; display: grid; grid-template: 941px 16px / 528px 15px; }
  .docside { overflow: hidden; min-width: 0; }
  .pdfbar { height: 41px; background: #f7f7f7; border-bottom: 1px solid #bcbcbc; display: grid; grid-template-columns: 44px 28px 96.5px 35px 36px 10px 41.5px 36px 30px 95px 36px 36px; align-items: center; justify-items: center; font-size: 12px; padding-bottom: 1px; }
  .pdfbar b { width: 1px; height: 16px; background: #aaa; }
  .pageno { width: 40px; height: 32px; border: 1px solid #aaa; border-radius: 2px; background: #fff; display: grid; place-items: center; justify-self: end; }
  .count { justify-self: center; }
  .find { width: 36px; height: 32px; border-radius: 3px; background: #e8e8e8; display: grid; place-items: center; }
  .paper { height: 900px; padding-left: 7px; background: linear-gradient(90deg, #e6e6e6, #c8c8c8) 0 0 / 7px 100% no-repeat, #e6e6e6; }
  .prev { height: 35px; margin-bottom: 18px; background: #fff; box-shadow: 0 0 8px #888; clip-path: inset(0 0 -10px -7px); }
  .page { height: 847px; background: #fff; box-shadow: 0 0 7px #999; font: 17.4px/26px Lato, "Open Sans", sans-serif; font-variant-ligatures: none; color: #000; padding-top: 114px; overflow: hidden; white-space: nowrap; }
  .page p { height: 26px; }
  .task { display: grid; }
  .seven { grid-template-columns: 35px 600px; padding-left: 114px; }
  .u { text-decoration: underline; text-decoration-thickness: 2px; text-underline-offset: 3px; text-decoration-skip-ink: none; }
  .eight { grid-template-columns: 29px 600px; padding-left: 126px; margin-top: 19px; font-weight: 700; }
  .para { padding-left: 126px; margin-top: 20px; }
  .shot { width: 600px; height: 345px; margin: 19px 0 0 125px; background: #ffa500; }
  .black { height: 4px; background: #141414; }
  .stabs { height: 37px; background: #dfdbd8; border-bottom: 1px solid #c4c0bc; display: grid; grid-template-columns: 21px 10px 23px 115px 14px 7px 157px 31px; align-items: center; justify-items: center; font: 12px "Open Sans", sans-serif; color: #444; padding-top: 1px; }
  .stabs b { width: 1px; height: 36px; background: #bbb6b2; }
  .stab { grid-column: 7; width: 157px; height: 30px; background: #f7f6f5; border-radius: 3px; box-shadow: 0 0 2px #999; display: grid; grid-template-columns: 1fr 24px; align-items: center; padding-left: 6px; justify-items: center; }
  .sbar { height: 36px; background: #f6f5f4; border-bottom: 1px solid #d8d3cf; display: grid; grid-template-columns: 27px 25px 26px 92px; align-items: center; justify-items: center; justify-content: start; font: 12.5px "Open Sans", sans-serif; color: #333; padding-top: 1px; }
  .surl { grid-column: 5; width: 430px; height: 27px; margin-left: -9px; background: #fff; border: 1px solid #ccc; border-radius: 3px; display: grid; grid-template-columns: 20px 20px 1fr; justify-items: center; align-items: center; }
  .surl .t { margin-left: 2px; }
  .sorange { padding: 18px 0 0 3px; font-family: "DejaVu Serif", serif; }
  .sorange h2 { font-size: 27.2px; line-height: 32px; height: 32px; }
  .sorange h3, .sorange p { font-size: 13.6px; line-height: 16px; height: 16px; }
  .sorange h3 { margin-top: 49px; }
  .sorange p { margin-top: 43px; color: #2a1b00; }
  .vscroll { display: flex; flex-direction: column; align-items: center; padding: 9px 0 10px; }
  .vscroll div { width: 9px; height: 200px; border-radius: 5px; background: #8a8a8a; margin: 589px 0 auto; }
  .hscroll { display: flex; align-items: center; padding: 0 9px; grid-column: 1; }
  .hscroll div { width: 259px; height: 9px; border-radius: 5px; background: #8a8a8a; margin: 0 auto 0 8px; }
  aside { width: 43px; padding-right: 2px; display: grid; grid-template-rows: 42px 40px 40px 24px 40px 1fr 8px 2px 40px 40px 41px; align-items: center; justify-items: center; background: linear-gradient(90deg, #f7f7f7 60%, #dcdcdc); }
  aside hr { width: 28px; height: 1px; background: #b5b5b5; }
  aside .end { align-self: end; }
  .olk { font: 700 9px "Liberation Sans", sans-serif; fill: #fff; }

  /* VirtualBox window */
  .vbox { border: 1px solid #1d3c50; border-top-color: #1b4565; background: #efefef; display: flex; flex-direction: column; color: #000; min-width: 0; }
  .vtitle { height: 30px; background: #fff; display: grid; grid-template-columns: 8px 16px 5px 199px 1fr 46px 46px 46px; align-items: center; justify-items: center; padding-bottom: 2px; }
  .vtitle > :nth-child(1) { grid-column: 2; }
  .vtitle > :nth-child(2) { grid-column: 4; }
  nav { height: 18px; background: #fff; padding-left: 7px; display: flex; align-items: center; font-size: 11px; }
  .guest { width: 1280px; height: 800px; margin: 85px 0 0 23px; display: grid; grid-template: 27px 773px / 70px 1210px; font: 14.5px "Noto Sans", "Open Sans", sans-serif; }
  .topbar { grid-column: 1 / 3; background: #131313; color: #f0f0f0; padding: 0 0 2px 18px; display: grid; grid-template-columns: 63px 37px 14px 7px 142px 353px 82px 425px 15px 25px 35px 22px 33px; align-items: center; justify-items: center; }
  .topbar > :nth-child(2) { grid-column: 3; }
  .topbar > :nth-child(3) { grid-column: 5; }
  .topbar .clock { grid-column: 7; }
  .topbar .hu { grid-column: 9; }
  .topbar > :nth-child(6) { grid-column: 11; }
  .dock { background: linear-gradient(160deg, #1b0e17, #2b1722); display: flex; flex-direction: column; align-items: center; gap: 4px; padding: 6px 0; }
  .tile { width: 64px; height: 64px; border-radius: 13px; display: grid; place-items: center; position: relative; flex: none; }
  .lit { background: #463942; padding-bottom: 2px; }
  .soft { background: #30242d; padding-top: 1px; }
  .run::before { content: ""; position: absolute; left: 0; top: 29px; width: 6px; height: 6px; border-radius: 50%; background: #e95420; }
  .store { padding-bottom: 6px; }
  .dock hr { width: 48px; height: 1px; background: #c9c5c8; margin: -1px 0; flex: none; }
  .apps { margin-top: auto; }
  .fftabs { height: 44px; background: #ebebeb; display: grid; grid-template-columns: 40px 4px 3px 221px 42px 1fr 40px 37px 34px 34px 34px 1px; align-items: center; justify-items: center; color: #333; }
  .fftabs b { width: 1px; height: 44px; background: #bbb; }
  .fftab { grid-column: 4; width: 221px; height: 37px; border-radius: 4px; background: #fbfbfb; box-shadow: 0 0 3px #888; display: grid; grid-template-columns: 1fr 33px; align-items: center; justify-items: center; padding-left: 8px; }
  .fftabs > :nth-child(5) { grid-column: 7; }
  .fftabs > :nth-child(6) { grid-column: 9; }
  .round { width: 22px; height: 22px; border-radius: 50%; background: #dadada; display: grid; place-items: center; }
  .ffbar { height: 41px; background: #fbfbfb; border-bottom: 1px solid #ddd; display: grid; grid-template-columns: 36px 38px 34px 90px 768px 89px 36px 36px 36px 36px; padding-left: 5px; align-items: center; justify-items: center; color: #333; }
  .ffurl { grid-column: 5; width: 768px; height: 32px; border-radius: 4px; background: #eee; display: grid; grid-template-columns: 32px 24px 6px 1fr 32px; align-items: center; justify-items: center; }
  .ffurl .t { grid-column: 4; }
  .ffbar > :nth-child(5) { grid-column: 7; }
  main { height: 688px; background: #ffa500; padding: 22px 0 0 8px; font: 16px/19px "DejaVu Serif", serif; color: #000; position: relative; }
  h1 { font-size: 32px; line-height: 38px; }
  h4 { margin-top: 58px; font-size: 16px; }
  main p { margin-top: 51px; }
  .tooltip { position: absolute; left: 0; top: 5px; width: 206px; height: 31px; border-radius: 16px; background: #22211f; border: 1px solid #3b3a36; color: #f0f0f0; display: flex; align-items: center; padding: 0 0 1px 12px; font: 14.5px "Noto Sans", sans-serif; }
  footer { height: 19px; margin-top: auto; display: grid; align-items: center; padding: 0 2px 0 1030px; grid-template-columns: repeat(8, 19px) 20px 19px 19px 65px 1fr; justify-items: center; font-size: 11.5px; }

  /* Taskbar */
  .taskbar { grid-column: 1 / 3; background: linear-gradient(90deg, #20353f, #213640 45%, #1b2c45 85%, #1a2945); display: grid; grid-template-columns: 48px 288px 48px 54px 44px 53px 46px 52px 44px 54px 1fr 51px 37px 11px 34px 67px 42.5px 15px; align-items: center; justify-items: center; color: #fff; }
  .app { width: 40px; height: 41px; display: grid; place-items: center; }
  .open { box-shadow: inset 0 -2px #76b9ed; }
  .active { width: 48px; background-color: #4a5c66; }
  .search { width: 288px; height: 40px; margin-top: 1px; background: #f2f2f2; border: 1px solid #aaa; color: #222; font-size: 14px; display: grid; grid-template-columns: 12px 17px 10px 142px 1fr 80px; align-items: center; }
  .search > :nth-child(1) { grid-column: 2; }
  .search .t { grid-column: 4; }
  .marmot { grid-column: 6; }
  .time { display: flex; flex-direction: column; align-items: center; font-size: 12px; line-height: 17px; width: 67px; padding-bottom: 1px; }
  .notice { justify-self: end; margin-top: 5px; }
  .badge { font: 700 11px "Open Sans", sans-serif; fill: #fff; }
  .taskbar b { width: 1px; height: 41px; background: #7b8594; justify-self: end; margin-right: 4px; }
</style>
